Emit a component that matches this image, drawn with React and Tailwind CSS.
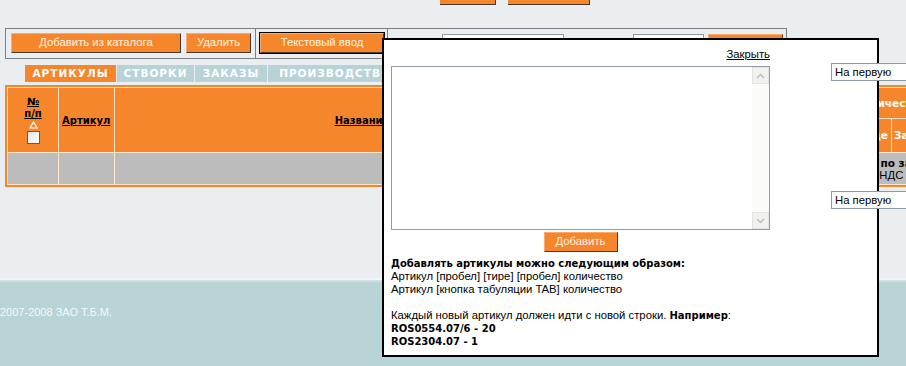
import React from 'react';

const sans = { fontFamily: '"Liberation Sans", Arial, sans-serif' };
const boldFont = { fontFamily: '"DejaVu Sans", Verdana, sans-serif' };

function Btn({ children, className = '' }) {
  return (
    <div
      className={`flex items-center justify-center bg-[#f5862b] text-[#fff4e6] text-[11.3px] leading-none border border-t-[#f8ab6c] border-l-[#f8ab6c] border-b-[#4a3a2e] border-r-[#4a3a2e] ${className}`}
    >
      {children}
    </div>
  );
}

function Tab({ children, active, className = '' }) {
  return (
    <div
      className={`h-[17px] flex items-center justify-center text-white font-bold text-[10.5px] tracking-[1px] ${active ? 'bg-[#f5862b]' : 'bg-[#b8d3d6]'} ${className}`}
      style={boldFont}
    >
      {children}
    </div>
  );
}

function Select() {
  return (
    <div className="relative z-10 w-[100px] h-[18px] bg-white border border-[#8d9aa6] flex items-center pl-[3px] text-[11.3px] text-black">
      На первую
    </div>
  );
}

function Chevron({ up }) {
  return (
    <svg width="9" height="6" viewBox="0 0 9 6">
      <path
        d={up ? 'M1 5 L4.5 1.5 L8 5' : 'M1 1 L4.5 4.5 L8 1'}
        fill="none"
        stroke="#b9bfc4"
        strokeWidth="1.5"
      />
    </svg>
  );
}

export default function App() {
  return (
    <div className="relative w-[906px] h-[366px] overflow-hidden bg-[#eaeef0]" style={sans}>
      {/* upper page */}
      <div className="h-[278px]">
        {/* top buttons (cut off) */}
        <div className="h-[5px] flex gap-[12px] pl-[440px]">
          <div className="w-[56px] h-[5px] bg-[#f5862b] border-b border-r border-[#4a3a2e]" />
          <div className="w-[82px] h-[5px] bg-[#f5862b] border-b border-r border-[#4a3a2e]" />
        </div>

        {/* toolbar */}
        <div className="mt-[23px] ml-[5px] w-[782px] h-[31px] border border-[#7b8085] flex">
          <div className="w-[250px] h-full border-r border-[#7b8085] flex gap-[5px] pl-[5px] pt-[4px]">
            <Btn className="w-[170px] h-[20px]">Добавить из каталога</Btn>
            <Btn className="w-[65px] h-[20px]">Удалить</Btn>
          </div>
          <div className="w-[132px] h-full border-r border-[#7b8085] pl-[4px] pt-[4px]">
            <Btn className="w-[124px] h-[20px] outline outline-1 outline-black">Текстовый ввод</Btn>
          </div>
          <div className="flex-1 h-full flex pt-[5px] pl-[54px]">
            <div className="w-[122px] h-[18px] bg-white border border-[#8d9aa6]" />
            <div className="w-[71px] h-[18px] bg-white border border-[#8d9aa6] ml-[69px]" />
            <Btn className="w-[75px] h-[20px] ml-[4px]">Найти</Btn>
          </div>
        </div>

        {/* tabs row */}
        <div className="mt-[4px] w-[931px] h-[19px] flex">
          <div className="flex self-end pl-[25px] gap-px">
            <Tab active className="w-[91px]">АРТИКУЛЫ</Tab>
            <Tab className="w-[77px]">СТВОРКИ</Tab>
            <Tab className="w-[72px]">ЗАКАЗЫ</Tab>
            <Tab className="w-[134px]">ПРОИЗВОДСТВО</Tab>
          </div>
          <div className="ml-auto self-start">
            <Select />
          </div>
        </div>

        {/* table */}
        <div className="mt-[3px] ml-[5px] w-[990px] border-2 border-[#f5862b]">
          <table className="table-fixed border-separate border-spacing-px bg-[#fce4c8] w-[986px] text-[11px]">
            <colgroup>
              <col className="w-[50px]" />
              <col className="w-[55px]" />
              <col className="w-[494px]" />
              <col className="w-[200px]" />
              <col className="w-[80px]" />
              <col className="w-[100px]" />
            </colgroup>
            <thead>
              <tr className="h-[30px]">
                <th rowSpan={2} className="bg-[#f5862b] p-0 align-middle">
                  <div className="flex flex-col items-center text-black font-bold text-[10px] leading-[12px]" style={boldFont}>
                    <span className="underline">№</span>
                    <span className="underline">п/п</span>
                    <svg width="9" height="8" viewBox="0 0 9 8" className="mt-[1px]">
                      <path d="M4.5 1 L8 7 L1 7 Z" fill="none" stroke="#ffffff" strokeWidth="1.2" />
                    </svg>
                    <div className="mt-[2px] w-[13px] h-[13px] border border-[#5b5b5b] bg-gradient-to-br from-[#dfe3ea] to-white" />
                  </div>
                </th>
                <th rowSpan={2} className="bg-[#f5862b] px-[3px] text-left">
                  <span className="underline text-black font-bold text-[10px]" style={boldFont}>Артикул</span>
                </th>
                <th rowSpan={2} className="bg-[#f5862b] text-center">
                  <span className="underline text-black font-bold text-[10px]" style={boldFont}>Название</span>
                </th>
                <th rowSpan={2} className="bg-[#f5862b] text-center">
                  <span className="underline text-black font-bold text-[10px]" style={boldFont}>Цена</span>
                </th>
                <th colSpan={2} className="bg-[#f5862b] text-left pl-[43px] whitespace-nowrap">
                  <span className="text-white font-bold text-[10.5px]" style={boldFont}>Количество</span>
                </th>
              </tr>
              <tr className="h-[33px]">
                <th className="bg-[#f5862b] text-right pr-[3px] whitespace-nowrap">
                  <span className="text-white font-bold text-[10.5px]" style={boldFont}>На складе</span>
                </th>
                <th className="bg-[#f5862b] text-left pl-[2px] whitespace-nowrap">
                  <span className="text-white font-bold text-[10.5px]" style={boldFont}>Заказано</span>
                </th>
              </tr>
            </thead>
            <tbody>
              <tr className="h-[31px]">
                <td className="bg-[#bcbcbc]" />
                <td className="bg-[#bcbcbc]" />
                <td className="bg-[#bcbcbc]" />
                <td className="bg-[#bcbcbc]" />
                <td colSpan={2} className="bg-[#bcbcbc] text-left pl-[40px] leading-[12px] whitespace-nowrap">
                  <div className="font-bold text-[10.5px] text-black ml-[-9px]" style={boldFont}>Итого по заказу:</div>
                  <div className="text-black text-[11.3px]">в т.ч. НДС</div>
                </td>
              </tr>
            </tbody>
          </table>
        </div>

        {/* lower select row */}
        <div className="mt-[4px] pl-[831px]">
          <Select />
        </div>
      </div>

      {/* footer */}
      <div className="h-[88px] bg-[#b9d4d6]">
        <div className="h-[2px] bg-[#f1f5f6]" />
        <div className="h-[3px] bg-gradient-to-b from-[#d6e5e7] to-[#b9d4d6]" />
        <div className="pt-[23px] text-[11px] leading-[13px] text-[#f3f8f8]">2007-2008 ЗАО Т.Б.М.</div>
      </div>

      {/* popup overlay */}
      <div className="absolute left-[382px] top-[38px] w-[497px] h-[319px] bg-white border-2 border-black">
        <div className="ml-[7px] w-[379px] pt-[8px]">
          <div className="flex justify-end h-[13px] leading-[13px] text-[11.3px]">
            <span className="underline text-black">Закрыть</span>
          </div>
          <div className="mt-[5px] h-[164px] border border-[#8f9ba7] bg-white flex justify-end">
            <div className="w-[17px] h-full bg-[#fbfbf9] flex flex-col justify-between">
              <div className="h-[17px] bg-[#f1f2ef] border border-[#e3e5e2] flex items-center justify-center">
                <Chevron up />
              </div>
              <div className="h-[17px] bg-[#f1f2ef] border border-[#e3e5e2] flex items-center justify-center">
                <Chevron />
              </div>
            </div>
          </div>
          <div className="flex justify-center mt-[2px]">
            <Btn className="w-[74px] h-[20px]">Добавить</Btn>
          </div>
          <div className="mt-[5px] text-[11.3px] leading-[13px] text-black">
            <div className="font-bold text-[10px]" style={boldFont}>Добавлять артикулы можно следующим образом:</div>
            <div>Артикул [пробел] [тире] [пробел] количество</div>
            <div>Артикул [кнопка табуляции TAB] количество</div>
            <div className="h-[13px]" />
            <div>
              Каждый новый артикул должен идти с новой строки.{' '}
              <span className="font-bold text-[10px]" style={boldFont}>Например</span>:
            </div>
            <div className="font-bold text-[10px]" style={boldFont}>ROS0554.07/6 - 20</div>
            <div className="font-bold text-[10px]" style={boldFont}>ROS2304.07 - 1</div>
          </div>
        </div>
      </div>
    </div>
  );
}
